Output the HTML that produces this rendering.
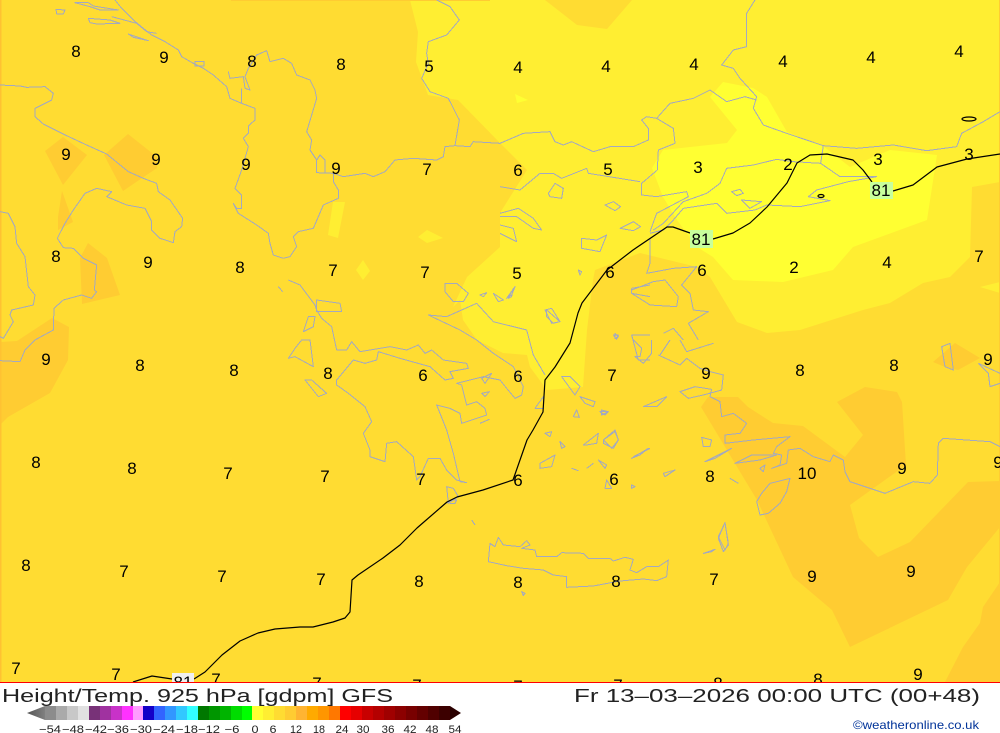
<!DOCTYPE html>
<html><head><meta charset="utf-8"><title>Height/Temp. 925 hPa GFS</title>
<style>html,body{margin:0;padding:0;background:#fff;width:1000px;height:733px;overflow:hidden}svg{display:block}text{font-family:"Liberation Sans",sans-serif}</style></head>
<body>
<svg xmlns="http://www.w3.org/2000/svg" width="1000" height="733" viewBox="0 0 1000 733">
<defs><clipPath id="m"><rect x="0" y="0" width="1000" height="682"/></clipPath>
<linearGradient id="gt" x1="0" x2="1" y1="0" y2="0"><stop offset="0" stop-color="#555"/><stop offset="1" stop-color="#808080"/></linearGradient></defs>
<rect width="1000" height="733" fill="#fff"/>
<g clip-path="url(#m)">
<rect width="1000" height="682" fill="#ffdc32"/>
<!-- yellow zone -->
<path fill="#ffee32" d="M410 0L418 32 416 62 428 95 458 100 500 143 527 170 510 197 500 213 500 247 467 277 453 307 460 300 463 320 477 340 503 353 527 355 530 367 547 390 583 387 587 330 593 280 595 270 640 253 697 267 710 277 737 322 767 333 800 330 863 310 890 303 923 283 950 277 970 257 972 187 1000 182 1000 0Z"/>
<path fill="#ffee32" d="M980 287L1000 282 1000 293Z"/>
<path fill="#ffdc32" d="M545 0L577 25 607 29 632 0Z"/>
<path fill="#ffff32" d="M710 97L723 82 753 88 767 97 787 132 823 146 850 167 890 150 937 155 927 220 853 247 833 270 783 282 733 280 713 257 697 247 677 220 663 197 652 168 663 150 727 143 737 130Z"/>
<path fill="#ffff32" d="M515 94L528 100 517 103Z"/>
<!-- yellow patches in base -->
<path fill="#ffee32" d="M333 202L345 202 338 238 328 235ZM363 260L370 271 363 280 356 270ZM427 230L443 238 427 243 418 237Z"/>
<!-- darker patches -->
<path fill="#ffcc32" d="M63 137L87 155 63 185 45 151ZM128 134L157 157 157 168 123 191 104 155ZM62 191L73 222 58 230 58 217ZM88 243L107 258 120 295 82 304 80 258ZM0 342L17 341 52 318 69 327 68 360 50 393 8 417 0 425Z"/>
<path fill="#ffcc32" d="M701 407L708 397 738 397 748 407 773 423 803 426 845 457 863 435 837 402 865 387 897 392 902 402 906 465 850 505 859 538 878 557 910 542 968 482 1000 481 1000 527 967 567 948 600 850 647 832 610 793 577 757 500Z"/>
<path fill="#ffcc32" d="M1000 582L983 607 980 623 963 647 945 682 1000 682ZM933 362L955 343 980 358 958 370 945 367Z"/>
<rect x="0" y="0" width="1.5" height="682" fill="#ffc232"/>
<rect x="231" y="0" width="259" height="1" fill="#ffcc32"/>
<rect x="999" y="0" width="1" height="682" fill="#ffcc32"/>
<!-- coastlines -->
<g fill="none" stroke="#a3a9c0" stroke-linejoin="round" shape-rendering="crispEdges">
<g transform="scale(.33333)" stroke-width="3">
<path d="M0 255L60 258 80 262 135 260 160 280 155 300 105 325 105 350 130 372 200 407 260 435 320 462 385 515 430 535 470 550 475 575 510 600 548 655 545 680 525 695 520 728 480 715 455 690 455 665 435 625 380 615 320 590 335 575 290 565 255 580 220 630 195 670 172 715 190 743 220 745 250 775 290 795 283 870 290 875 275 895 245 885 190 900 162 925 160 990 105 1020 75 1050 60 1085 0 1082"/>
<path d="M0 635L25 640 45 680 50 730 75 770 85 860 105 885 100 915 35 930 30 945 40 965 10 1015 0 1010"/>
<path d="M225 8L265 8 280 18 355 30 300 30 270 20ZM265 55L330 60 360 70 290 72 270 68ZM335 50L410 70 440 95 470 100M385 102L445 122 400 112ZM168 28L195 30 190 42 170 42Z"/>
<path d="M345 0L365 25 400 60 430 85 455 105 495 125 535 150 545 170 580 190 610 205 640 225 680 260 690 295 725 310 765 325 765 360 745 378 745 400 730 415 745 440 725 510 705 565 725 585 725 625 710 625 700 610 715 640 770 675 805 700 810 730 820 765 850 775"/>
<path d="M585 185H612V198H585ZM725 310L725 265M685 215L690 235 730 230 735 265 750 270 735 230 745 205 770 165 800 152 810 185 850 175 875 190 890 225 930 240 945 270 950 295 935 345 920 395 935 420 930 450 950 480 950 518 1000 520 1030 530 1095 520 1120 530 1155 515 1185 480 1240 475 1310 480 1330 470 1335 440 1365 437 1410 440 1420 425 1500 430"/>
<path d="M950 480L960 465 975 480 975 520M1000 515L1000 545 1015 570 1015 595 970 615 940 685 895 695 880 710 890 740 870 770 850 775"/>
<path d="M1310 0L1350 20 1378 60 1340 105 1285 125 1280 160 1285 190 1265 235 1290 275 1345 295 1378 360 1365 437"/>
<path d="M835 860L848 875"/>
</g>
<g transform="translate(500 0) scale(.33333)" stroke-width="3">
<path d="M0 430L70 400 150 395 165 425 190 435 215 425 280 455 330 440 400 440 445 420 445 385 425 360 440 350 470 355 520 385 525 430 475 450 472 510 425 550 425 585 470 590 560 575 565 590 470 640 450 695"/>
<path d="M765 0L740 40 740 140 700 150 665 195 700 205 720 235 770 290 760 325 790 375 860 400 970 437 1070 445 1180 435 1280 452 1370 440 1385 400 1450 365 1500 335"/>
<path d="M470 355L510 310 580 295 630 270 680 305 735 290 770 300"/>
<path d="M970 437L962 490 1020 530 1130 530 1045 545 950 570 925 590 990 602 900 620 800 615 765 630 680 640 650 610 550 625 520 660 490 690 450 700"/>
<path d="M680 505L760 495 830 478 880 485 962 490M680 505L660 550 620 580 550 605 490 670 460 690"/>
<path d="M145 580L165 550 190 565 185 595 150 590ZM315 615L340 605 362 620 345 632ZM360 685L400 665 422 680 400 692ZM695 575L720 568 730 580 710 587ZM725 600L785 605 750 625ZM245 715L290 720 320 705 300 755 245 745Z"/>
<path d="M0 560L60 570 120 520 160 520 185 535 260 505 265 520 420 545"/>
<path d="M0 640L55 625 100 655 125 690 100 685 50 650 0 650M0 675L40 685 50 725 0 700"/>
<path d="M450 715L450 790 440 820 520 805 590 800 545 855 570 880 580 930 625 935 565 970 595 1020"/>
<path d="M395 870L460 845 495 840 535 890 530 920 450 915 395 880ZM235 810L245 815 240 825ZM20 895L45 860 35 885ZM140 930L180 965 160 970 140 950ZM490 1000L520 985 550 1020M340 1005L355 1005 350 1018Z"/>
</g>
<g transform="translate(250 280) scale(.33333)" stroke-width="3">
<path d="M115 0L150 15 195 75 200 90 215 115 245 140 260 210 290 210 305 185 330 215 390 205 420 200 470 210 505 195 525 220 545 210 580 240 650 250 655 265 600 275 610 295 585 300 540 260 450 235 385 215 380 240 345 250 310 240 260 300 260 315 295 340 345 380 365 425 340 460 360 510 360 530 405 545 410 490 440 485 490 530 500 600 510 590 535 535 570 535 590 570 620 600 650 608 630 605 610 520 590 450 560 375 600 385 630 400 635 430 710 405 705 385 680 365 650 375 635 315 620 310 700 290 750 300 770 325 795 355 815 345 820 320 790 260 730 220 680 180 630 150 535 105 590 110 680 70 730 125 830 150 850 225 885 285"/>
<path d="M200 60L270 70 275 95 200 95ZM160 155L175 110 195 110 190 140ZM135 205L155 180 180 180 190 260 135 230 115 235ZM165 300L185 300 230 340 205 350ZM585 10L620 10 655 40 640 65 610 65 585 35ZM885 90L905 85 930 125 905 130ZM1145 25L1200 15M1200 50L1145 40 1145 25M1145 165L1200 165M1200 240L1165 240 1145 165M935 290L960 290 990 320 975 345ZM990 350L1035 365 1030 380 1005 370ZM690 45L710 38 700 50ZM730 40L760 60 745 65ZM775 55L790 25 785 50ZM855 385L880 350 880 385ZM885 460L905 455 900 470ZM930 485L945 500 935 505ZM970 410L980 390 988 412ZM1000 495L1045 460 1040 490 1010 495ZM1060 480L1095 455 1105 480 1090 505 1060 490ZM870 550L915 525 905 560 870 565ZM1050 395L1075 395 1065 405ZM690 430L718 418M1010 565L1030 550M1045 540L1070 555 1065 565ZM1150 530L1200 505M965 565L985 572M695 340L718 335 705 350ZM695 295L725 280 705 310ZM590 620L610 625 625 650 595 670ZM1095 160L1105 170 1095 175Z"/>
</g>
<g transform="translate(600 340) scale(.33333)" stroke-width="3">
<path d="M100 0L125 25 120 50 105 50 130 70 155 40 155 0M175 45L240 75 260 55 300 85 330 95 370 105 365 150 310 165 265 175 240 155 285 140 335 148 330 170 360 185 365 230 400 220 440 250 420 280 375 285 375 310 460 300 570 290 530 320 520 340 545 345 540 375 515 385 560 370 565 330 600 325 640 350 690 365 700 345 730 360 735 395 750 425 810 445 855 460 940 425 990 430 1012 405 1015 310 1030 295 1100 300 1170 305 1200 320"/>
<path d="M570 415L510 430 485 460 470 485 480 525 505 520 540 490 560 455Z"/>
<path d="M130 200L200 170 170 200ZM315 365L395 325 345 355ZM405 370L455 345 530 345 480 360ZM480 385L495 375 490 395ZM305 292L335 300 330 320 310 320ZM190 400L225 390 195 410ZM95 435L105 440 95 445ZM390 415L415 430M375 548L355 590 375 630 385 610ZM312 640L342 630ZM10 300L45 270 55 300 35 325ZM95 355L145 325 120 345ZM5 210L25 215 5 225ZM20 420L35 445 15 445ZM1025 20L1050 10 1060 90 1035 80ZM1135 70L1165 100 1170 140 1200 130M1135 70L1200 100M240 0L260 35 340 10M180 45L210 0"/>
</g>
<g transform="translate(300 500) scale(.33333)" stroke-width="3">
<path d="M565 185L570 130 585 140 595 112 610 135 660 140 680 122 690 135 665 145 705 150 710 170 770 170 785 158 850 160 865 175 930 175 940 183 975 172 1000 178 990 210 1010 218 1040 200 1075 200 1105 180 1100 230 1070 242 1030 237 960 243 880 258 800 262 800 230 760 225 730 210 670 205 620 197Z"/>
<path d="M665 275L675 280 670 287ZM515 60L525 75M1275 68L1255 115 1270 155 1285 135ZM1210 160L1245 148 1235 155ZM440 10L455 0 470 0 465 10 450 10"/>
</g>
</g>
<!-- isoline -->
<g fill="none" stroke="#000" stroke-width="1.2" stroke-linejoin="round">
<path d="M133 682L152 676 172 679M194 679L205 672 222 655 240 641 258 633 275 629 300 627 313 627 333 622 345 618 350 612 352 580 358 575 383 558 400 545 417 528 447 502 457 497 483 490 513 480 527 440 533 430 543 412 545 380 555 367 570 343 578 313 582 303 607 270 633 250 667 227 673 227 690 233M713 239L733 233 750 223 767 207 787 183 797 163 810 155 827 154 853 160 863 170 872 182M893 191L913 185 937 167 967 159 1000 154"/>
<ellipse cx="969" cy="119" rx="7" ry="2"/>
<ellipse cx="821" cy="196" rx="3" ry="1.5"/>
</g>
<rect x="690" y="230" width="23" height="18" fill="#c8ff9c"/>
<rect x="870" y="182" width="23" height="17" fill="#c8ff9c"/>
<rect x="172" y="673" width="22" height="9" fill="#f0f0f0"/>
<g font-size="17" fill="#000" text-anchor="middle">
<text x="701" y="245">81</text><text x="881" y="196">81</text><text x="183" y="688">81</text>
<text x="76" y="57">8</text><text x="164" y="63">9</text><text x="252" y="67">8</text><text x="341" y="70">8</text><text x="429" y="72">5</text><text x="518" y="73">4</text><text x="606" y="72">4</text><text x="694" y="70">4</text><text x="783" y="67">4</text><text x="871" y="63">4</text><text x="959" y="57">4</text>
<text x="66" y="160">9</text><text x="156" y="165">9</text><text x="246" y="170">9</text><text x="336" y="174">9</text><text x="427" y="175">7</text><text x="518" y="176">6</text><text x="608" y="175">5</text><text x="698" y="173">3</text><text x="788" y="170">2</text><text x="878" y="165">3</text><text x="969" y="160">3</text>
<text x="56" y="262">8</text><text x="148" y="268">9</text><text x="240" y="273">8</text><text x="333" y="276">7</text><text x="425" y="278">7</text><text x="517" y="279">5</text><text x="610" y="278">6</text><text x="702" y="276">6</text><text x="794" y="273">2</text><text x="887" y="268">4</text><text x="979" y="262">7</text>
<text x="46" y="365">9</text><text x="140" y="371">8</text><text x="234" y="376">8</text><text x="328" y="379">8</text><text x="423" y="381">6</text><text x="518" y="382">6</text><text x="612" y="381">7</text><text x="706" y="379">9</text><text x="800" y="376">8</text><text x="894" y="371">8</text><text x="988" y="365">9</text>
<text x="36" y="468">8</text><text x="132" y="474">8</text><text x="228" y="479">7</text><text x="325" y="482">7</text><text x="421" y="485">7</text><text x="518" y="486">6</text><text x="614" y="485">6</text><text x="710" y="482">8</text><text x="807" y="479">10</text><text x="902" y="474">9</text><text x="998" y="468">9</text>
<text x="26" y="571">8</text><text x="124" y="577">7</text><text x="222" y="582">7</text><text x="321" y="585">7</text><text x="419" y="587">8</text><text x="518" y="588">8</text><text x="616" y="587">8</text><text x="714" y="585">7</text><text x="812" y="582">9</text><text x="911" y="577">9</text>
<text x="16" y="674">7</text><text x="116" y="680">7</text><text x="216" y="685">7</text><text x="317" y="689">7</text><text x="417" y="691">7</text><text x="518" y="692">7</text><text x="618" y="691">7</text><text x="718" y="689">8</text><text x="818" y="685">8</text><text x="918" y="680">9</text>
</g>
</g>
<rect x="0" y="682" width="1000" height="1" fill="#f00"/>
<!-- headers -->
<text x="2" y="702" font-size="18" textLength="391" lengthAdjust="spacingAndGlyphs" fill="#222">Height/Temp. 925 hPa [gdpm] GFS</text>
<text x="574" y="702" font-size="18" textLength="406" lengthAdjust="spacingAndGlyphs" fill="#222">Fr 13–03–2026 00:00 UTC (00+48)</text>
<!-- colour bar -->
<path d="M27 713L45 706V720Z" fill="url(#gt)"/>
<path d="M450 706L461 713 450 720Z" fill="#2a0000"/>
<g shape-rendering="crispEdges">
<rect x="45" y="706" width="11" height="14" fill="#8c8c8c"/><rect x="56" y="706" width="11" height="14" fill="#aaaaaa"/><rect x="67" y="706" width="11" height="14" fill="#c8c8c8"/><rect x="78" y="706" width="11" height="14" fill="#e1e1e1"/>
<rect x="89" y="706" width="11" height="14" fill="#783278"/><rect x="100" y="706" width="11" height="14" fill="#a032a0"/><rect x="111" y="706" width="11" height="14" fill="#c832c8"/><rect x="122" y="706" width="11" height="14" fill="#ff32ff"/><rect x="133" y="706" width="10" height="14" fill="#ff9bff"/>
<rect x="143" y="706" width="11" height="14" fill="#1400c8"/><rect x="154" y="706" width="11" height="14" fill="#3264ff"/><rect x="165" y="706" width="11" height="14" fill="#3296ff"/><rect x="176" y="706" width="11" height="14" fill="#32c8ff"/><rect x="187" y="706" width="11" height="14" fill="#32ffff"/>
<rect x="198" y="706" width="11" height="14" fill="#007800"/><rect x="209" y="706" width="11" height="14" fill="#009600"/><rect x="220" y="706" width="11" height="14" fill="#00b400"/><rect x="231" y="706" width="11" height="14" fill="#00dc00"/><rect x="242" y="706" width="10" height="14" fill="#00ff00"/>
<rect x="252" y="706" width="11" height="14" fill="#ffff32"/><rect x="263" y="706" width="11" height="14" fill="#ffee32"/><rect x="274" y="706" width="11" height="14" fill="#ffdc32"/><rect x="285" y="706" width="11" height="14" fill="#ffcc32"/><rect x="296" y="706" width="11" height="14" fill="#ffb432"/>
<rect x="307" y="706" width="11" height="14" fill="#ffaa00"/><rect x="318" y="706" width="11" height="14" fill="#ff9600"/><rect x="329" y="706" width="11" height="14" fill="#ff7800"/>
<rect x="340" y="706" width="11" height="14" fill="#ff0000"/><rect x="351" y="706" width="11" height="14" fill="#e60000"/><rect x="362" y="706" width="11" height="14" fill="#c80000"/><rect x="373" y="706" width="11" height="14" fill="#b40000"/><rect x="384" y="706" width="11" height="14" fill="#a00000"/>
<rect x="395" y="706" width="11" height="14" fill="#8c0000"/><rect x="406" y="706" width="11" height="14" fill="#780000"/><rect x="417" y="706" width="11" height="14" fill="#640000"/><rect x="428" y="706" width="11" height="14" fill="#500000"/><rect x="439" y="706" width="11" height="14" fill="#3c0000"/>
</g>
<g font-size="11" fill="#222" text-anchor="middle" lengthAdjust="spacingAndGlyphs">
<text x="50" y="733" textLength="22" lengthAdjust="spacingAndGlyphs">−54</text><text x="73" y="733" textLength="22" lengthAdjust="spacingAndGlyphs">−48</text><text x="96" y="733" textLength="22" lengthAdjust="spacingAndGlyphs">−42</text><text x="118" y="733" textLength="22" lengthAdjust="spacingAndGlyphs">−36</text><text x="141" y="733" textLength="22" lengthAdjust="spacingAndGlyphs">−30</text><text x="164" y="733" textLength="22" lengthAdjust="spacingAndGlyphs">−24</text><text x="187" y="733" textLength="22" lengthAdjust="spacingAndGlyphs">−18</text><text x="209" y="733" textLength="22" lengthAdjust="spacingAndGlyphs">−12</text><text x="232" y="733" textLength="15" lengthAdjust="spacingAndGlyphs">−6</text><text x="255" y="733" textLength="7" lengthAdjust="spacingAndGlyphs">0</text><text x="273" y="733" textLength="7" lengthAdjust="spacingAndGlyphs">6</text><text x="296" y="733" textLength="12" lengthAdjust="spacingAndGlyphs">12</text><text x="319" y="733" textLength="12" lengthAdjust="spacingAndGlyphs">18</text><text x="342" y="733" textLength="13" lengthAdjust="spacingAndGlyphs">24</text><text x="363" y="733" textLength="13" lengthAdjust="spacingAndGlyphs">30</text><text x="388" y="733" textLength="13" lengthAdjust="spacingAndGlyphs">36</text><text x="410" y="733" textLength="13" lengthAdjust="spacingAndGlyphs">42</text><text x="432" y="733" textLength="13" lengthAdjust="spacingAndGlyphs">48</text><text x="455" y="733" textLength="13" lengthAdjust="spacingAndGlyphs">54</text>
</g>
<text x="853" y="729" font-size="12" textLength="126" lengthAdjust="spacingAndGlyphs" fill="#003399">©weatheronline.co.uk</text>
</svg>
</body></html>
